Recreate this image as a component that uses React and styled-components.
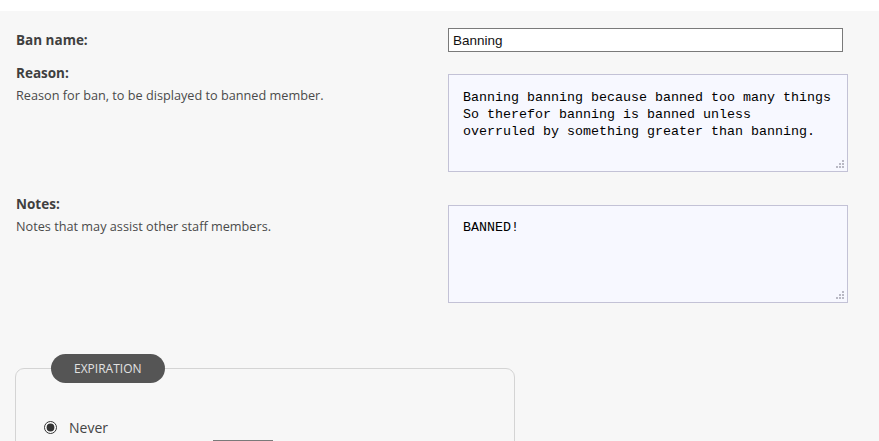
import React from "react";
import styled, { createGlobalStyle } from "styled-components";

const GlobalStyle = createGlobalStyle`
  html, body {
    margin: 0;
    padding: 0;
    background: #ffffff;
  }
  body {
    font-family: "Open Sans", "Noto Sans", sans-serif;
    color: #444444;
  }
`;

const Page = styled.div`
  margin-top: 11px;
  background: #f7f7f7;
  min-height: 460px;
  padding: 17px 0 0 16px;
`;

const Row = styled.div`
  display: grid;
  grid-template-columns: 432px 400px;
  align-items: start;
  margin-top: ${(p) => p.$top || 0}px;
`;

const LabelCell = styled.div`
  padding-top: ${(p) => p.$pad || 0}px;
`;

const Label = styled.div`
  font-size: 13.5px;
  font-weight: 700;
  line-height: 20px;
  color: #3f3f3f;
`;

const Hint = styled.div`
  margin-top: 3px;
  font-size: 12.7px;
  line-height: 18px;
  color: #4a4a4a;
`;

const TextInput = styled.input`
  box-sizing: border-box;
  width: 395px;
  height: 24px;
  margin: 0;
  padding: 0 4px;
  border: 1px solid #7a7a7a;
  background: #ffffff;
  font-family: "Liberation Sans", Arial, sans-serif;
  font-size: 13.5px;
  color: #111;
  outline: none;
`;

const AreaWrap = styled.div`
  position: relative;
  width: 400px;
  margin-top: ${(p) => p.$top || 0}px;
`;

const TextArea = styled.textarea`
  box-sizing: border-box;
  display: block;
  width: 400px;
  height: 98px;
  margin: 0;
  padding: ${(p) => p.$padTop || 14}px 14px 14px;
  border: 1px solid #c3c2d6;
  background: #f7f8ff;
  font-family: "Liberation Mono", "Courier New", monospace;
  font-size: 13.33px;
  line-height: 17px;
  color: #000;
  outline: none;
  resize: none;
`;

const Grip = styled.svg`
  position: absolute;
  right: 4px;
  bottom: 4px;
  width: 9px;
  height: 9px;
  pointer-events: none;
`;

const Fieldset = styled.fieldset`
  box-sizing: border-box;
  width: 500px;
  margin: 51px 0 0 -1px;
  padding: 32px 28px 0;
  border: 1px solid #d4d4d4;
  border-radius: 9px;
  min-height: 120px;
`;

const Legend = styled.legend`
  margin-left: 7px;
  padding: 0 23px;
  height: 29px;
  line-height: 29px;
  border-radius: 15px;
  background: #555555;
  color: #e2e2e2;
  font-size: 12px;
`;

const Option = styled.label`
  display: flex;
  align-items: center;
  gap: 12px;
  height: 24px;
  font-size: 14px;
  color: #444;
`;

const Radio = styled.input`
  width: 13px;
  height: 13px;
  margin: 0;
  accent-color: #333;
`;

const DateRow = styled.div`
  display: flex;
  padding: 1px 0 0 169px;
`;

const SmallBox = styled.input`
  box-sizing: border-box;
  width: 60px;
  height: 24px;
  margin: 0;
  border: 1px solid #7a7a7a;
  border-top-width: 2px;
  background: #fff;
`;

const ResizeGrip = () => (
  <Grip viewBox="0 0 9 9">
    {[
      [7, 1],
      [4, 4],
      [7, 4],
      [1, 7],
      [4, 7],
      [7, 7],
    ].map(([x, y]) => (
      <rect key={`${x}-${y}`} x={x} y={y} width="2" height="2" fill="#b9b9c4" />
    ))}
  </Grip>
);

export default function App() {
  return (
    <>
      <GlobalStyle />
      <Page>
        <Row>
          <LabelCell $pad={2}>
            <Label>Ban name:</Label>
          </LabelCell>
          <TextInput defaultValue="Banning" />
        </Row>
        <Row $top={11}>
          <LabelCell>
            <Label>Reason:</Label>
            <Hint>Reason for ban, to be displayed to banned member.</Hint>
          </LabelCell>
          <AreaWrap $top={11}>
            <TextArea
              $padTop={14}
              defaultValue={
                "Banning banning because banned too many things\nSo therefor banning is banned unless\noverruled by something greater than banning."
              }
            />
            <ResizeGrip />
          </AreaWrap>
        </Row>
        <Row $top={22}>
          <LabelCell>
            <Label>Notes:</Label>
            <Hint>Notes that may assist other staff members.</Hint>
          </LabelCell>
          <AreaWrap $top={11}>
            <TextArea $padTop={13} defaultValue="BANNED!" />
            <ResizeGrip />
          </AreaWrap>
        </Row>
        <Fieldset>
          <Legend>EXPIRATION</Legend>
          <Option>
            <Radio type="radio" name="exp" defaultChecked />
            Never
          </Option>
          <DateRow>
            <SmallBox type="text" aria-label="Expiry date" />
          </DateRow>
        </Fieldset>
      </Page>
    </>
  );
}
